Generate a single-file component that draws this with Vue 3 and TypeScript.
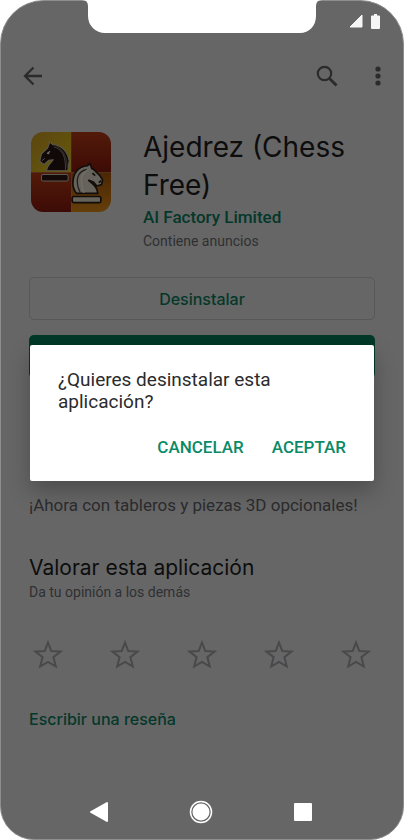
<script setup lang="ts">
import { ref } from 'vue'

const stars = [1, 2, 3, 4, 5]
const rating = ref(0)
const dialogOpen = ref(true)

function closeDialog(): void {
  dialogOpen.value = false
}
</script>

<template>
  <div class="phone">
    <svg class="notch" viewBox="0 0 241 33" aria-hidden="true">
      <path d="M0 0Q6 0 6 6V16C6 26 14 33 23 33H218C227 33 234 26 234 16V6Q234 0 240 0Z" fill="#fff" />
    </svg>

    <div class="status">
      <svg width="14" height="14" viewBox="0 0 14 14" aria-hidden="true">
        <path d="M13 1V13H1Z" fill="#f5f5f5" stroke="#f5f5f5" stroke-linejoin="round" />
      </svg>
      <svg width="9" height="15" viewBox="0 0 9 15" aria-hidden="true">
        <path d="M3 0H6V1.500H8Q9 1.500 9 2.500V14Q9 15 8 15H1Q0 15 0 14V2.500Q0 1.500 1 1.500H3Z" fill="#f5f5f5" />
      </svg>
    </div>

    <header class="toolbar">
      <button class="icon-button" aria-label="Atrás">
        <svg width="20" height="20" viewBox="0 0 20 20">
          <path d="M19 10H2M10.500 1.500L2 10L10.500 18.500" fill="none" stroke="#2a2b2b" stroke-width="2.300" />
        </svg>
      </button>
      <button class="icon-button search" aria-label="Buscar">
        <svg width="22" height="22" viewBox="0 0 22 22">
          <circle cx="8.500" cy="8.500" r="6.700" fill="none" stroke="#2a2b2b" stroke-width="2.200" />
          <path d="M13.500 13.500L20.500 20.500" stroke="#2a2b2b" stroke-width="2.800" />
        </svg>
      </button>
      <button class="icon-button" aria-label="Más opciones">
        <svg width="6" height="20" viewBox="0 0 6 20" fill="#2a2b2b">
          <circle cx="3" cy="3" r="2.600" />
          <circle cx="3" cy="10" r="2.600" />
          <circle cx="3" cy="17" r="2.600" />
        </svg>
      </button>
    </header>

    <main class="content">
      <section class="app">
        <svg class="app-icon" viewBox="36 36 237 237" role="img" aria-label="Ajedrez">
          <defs>
            <clipPath id="tile"><rect x="36" y="36" width="237" height="237" rx="36" /></clipPath>
            <linearGradient id="yellow" x1="0" y1="0" x2="1" y2="1">
              <stop offset="0" stop-color="#5c4510" /><stop offset="1" stop-color="#655b0b" />
            </linearGradient>
            <linearGradient id="red" x1="0" y1="0" x2="0" y2="1">
              <stop offset="0" stop-color="#521a09" /><stop offset="1" stop-color="#3d0b06" />
            </linearGradient>
            <linearGradient id="amber" x1="0" y1="0" x2="0" y2="1">
              <stop offset="0" stop-color="#4a2605" /><stop offset="1" stop-color="#653f0a" />
            </linearGradient>
          </defs>
          <g clip-path="url(#tile)">
            <path d="M36 36H155V155H36Z" fill="url(#yellow)" />
            <path d="M155 36H273V155H155Z" fill="url(#red)" />
            <path d="M36 155H155V273H36Z" fill="url(#red)" />
            <path d="M155 155H273V273H155Z" fill="url(#amber)" />
          </g>
          <g stroke-linejoin="round">
            <path d="M92 66L101 74C126 75 144 94 149 121L145 151H82C83 137 92 131 102 118L88 120L75 132L62 123L67 101L85 84Z" fill="#100908" stroke="#5c5852" stroke-width="3" />
            <path d="M104 80C126 86 140 105 138 149" fill="none" stroke="#5c5852" stroke-width="2" />
            <path d="M111 77C132 89 144 112 143 142" fill="none" stroke="#4b4741" stroke-width="2" />
            <path d="M83 99L92 93L88 101ZM68 121L77 114" fill="#77736b" stroke="#77736b" stroke-width="2" />
            <rect x="67" y="162" width="79" height="19" rx="5" fill="#120908" stroke="#5c5852" stroke-width="3" />
            <path d="M211 129L203 136C178 139 161 156 160 187C160 203 165 211 171 218H234C234 201 220 190 207 179L221 184L231 196L245 192L248 178L240 165L223 148L216 144Z" fill="#66635c" stroke="#120d0b" stroke-width="5" />
            <path d="M202 147C177 151 169 172 175 198L182 217" fill="none" stroke="#26211d" stroke-width="4" />
            <path d="M205 148C183 159 181 185 193 216" fill="none" stroke="#706d65" stroke-width="5" />
            <path d="M218 158L226 165M237 186L244 180" stroke="#120d0b" stroke-width="5" />
            <rect x="158" y="227" width="85" height="18" rx="5" fill="#66635c" stroke="#120d0b" stroke-width="5" />
          </g>
        </svg>
        <div class="app-info">
          <h1>Ajedrez (Chess Free)</h1>
          <a class="publisher" href="#">AI Factory Limited</a>
          <p class="ads">Contiene anuncios</p>
        </div>
      </section>

      <div class="actions">
        <button class="uninstall">Desinstalar</button>
        <button class="open">Abrir</button>
      </div>

      <p class="description">¡Ahora con tableros y piezas 3D opcionales!</p>

      <section class="rate">
        <h2>Valorar esta aplicación</h2>
        <p class="rate-hint">Da tu opinión a los demás</p>
        <div class="stars">
          <button v-for="n in stars" :key="n" class="icon-button" :aria-label="`${n} de 5`" @click="rating = n">
            <svg width="38" height="38" viewBox="0 0 38 38">
              <path
                d="M19 6.500L22.300 15L31.500 15.500L24.400 21.200L26.800 30.500L19 25.800L11.200 30.500L13.600 21.200L6.500 15.500L15.700 15Z"
                :fill="n <= rating ? '#49494b' : 'none'"
                stroke="#49494b"
                stroke-width="2"
              />
            </svg>
          </button>
        </div>
        <a class="review" href="#">Escribir una reseña</a>
      </section>
    </main>

    <nav class="system-nav">
      <button class="icon-button" aria-label="Volver">
        <svg width="20" height="22" viewBox="0 0 20 22">
          <path d="M18 2V20L2 11Z" fill="#fff" stroke="#fff" stroke-width="2" stroke-linejoin="round" />
        </svg>
      </button>
      <button class="icon-button" aria-label="Inicio">
        <svg width="24" height="24" viewBox="0 0 24 24">
          <circle cx="12" cy="12" r="10.500" fill="none" stroke="#fff" stroke-width="1.500" />
          <circle cx="12" cy="12" r="8.500" fill="#fff" />
        </svg>
      </button>
      <button class="icon-button" aria-label="Recientes">
        <svg width="20" height="20" viewBox="0 0 20 20">
          <rect x="1" y="1" width="18" height="18" rx="1" fill="#fff" />
        </svg>
      </button>
    </nav>

    <div v-if="dialogOpen" class="overlay">
      <div class="dialog" role="alertdialog" aria-modal="true" aria-labelledby="question">
        <p id="question" class="question">¿Quieres desinstalar esta aplicación?</p>
        <div class="dialog-actions">
          <button @click="closeDialog">CANCELAR</button>
          <button @click="closeDialog">ACEPTAR</button>
        </div>
      </div>
    </div>
  </div>
</template>

<style>
body {
  background: #fff;
}
</style>

<style scoped>
.phone {
  position: relative;
  display: flex;
  flex-direction: column;
  box-sizing: border-box;
  min-height: 100vh;
  border: 1px solid #8e8e8e;
  border-radius: 44px 44px 34px 34px;
  background: #666;
  font-family: Roboto, "Liberation Sans", sans-serif;
}

h1,
h2,
p {
  margin: 0;
  font-weight: 400;
}

a {
  text-decoration: none;
}

button {
  padding: 0;
  border: 0;
  background: none;
  font-family: inherit;
  cursor: pointer;
}

svg {
  display: block;
}

.icon-button {
  display: flex;
}

.notch {
  position: absolute;
  top: -1px;
  left: 50%;
  width: 241px;
  margin-left: -120px;
}

.status {
  display: flex;
  justify-content: flex-end;
  gap: 8px;
  padding: 13px 23px 0;
}

.toolbar {
  display: flex;
  align-items: center;
  gap: 37px;
  padding: 36px 22px 0;
}

.search {
  margin-left: auto;
}

.content {
  display: flex;
  flex-direction: column;
  padding: 41px 28px 0;
}

.app {
  display: flex;
  gap: 32px;
  padding: 0 2px;
}

.app-icon {
  flex: none;
  width: 80px;
  height: 80px;
  margin-top: 4px;
}

.app-info {
  display: flex;
  flex-direction: column;
}

h1 {
  color: #0d0d0e;
  font-family: Inter, Roboto, sans-serif;
  font-size: 28px;
  line-height: 38px;
}

.publisher {
  color: #04382a;
  font-size: 17px;
  font-weight: 500;
  line-height: 26px;
}

.ads {
  color: #2f3032;
  font-size: 14px;
  line-height: 22px;
}

.actions {
  display: grid;
  gap: 15px;
  padding-top: 25px;
}

.uninstall,
.open {
  box-sizing: border-box;
  height: 43px;
  border-radius: 5px;
  font-family: Inter, Roboto, sans-serif;
  font-size: 16px;
  font-weight: 500;
}

.uninstall {
  border: 1px solid #575859;
  color: #04382a;
}

.open {
  background: #003828;
  color: #666;
}

.description {
  padding-top: 115px;
  color: #2b2c2e;
  font-size: 17px;
  line-height: 24px;
}

.rate {
  padding-top: 37px;
}

h2 {
  color: #0d0d0e;
  font-family: Inter, Roboto, sans-serif;
  font-size: 21px;
  line-height: 28px;
}

.rate-hint {
  color: #2f3032;
  font-size: 14px;
  line-height: 20px;
}

.stars {
  display: flex;
  justify-content: space-between;
  padding: 34px 0 33px;
}

.review {
  color: #04382a;
  font-family: Inter, Roboto, sans-serif;
  font-size: 16px;
  font-weight: 500;
  line-height: 24px;
}

.system-nav {
  display: flex;
  align-items: center;
  justify-content: space-between;
  margin-top: auto;
  padding: 0 90px 15px 88px;
}

.overlay {
  position: absolute;
  inset: 0;
  display: flex;
  align-items: center;
  padding: 0 29px 14px;
}

.dialog {
  flex: 1;
  box-sizing: border-box;
  padding: 24px 28px;
  border-radius: 2px;
  background: #fff;
  box-shadow: 0 10px 22px rgba(0, 0, 0, 0.25);
}

.question {
  color: #2b2b2d;
  font-size: 19px;
  line-height: 22px;
}

.dialog-actions {
  display: flex;
  justify-content: flex-end;
  gap: 28px;
  padding-top: 24px;
}

.dialog-actions button {
  color: #0b8a67;
  font-size: 17px;
  font-weight: 500;
  line-height: 20px;
}
</style>
